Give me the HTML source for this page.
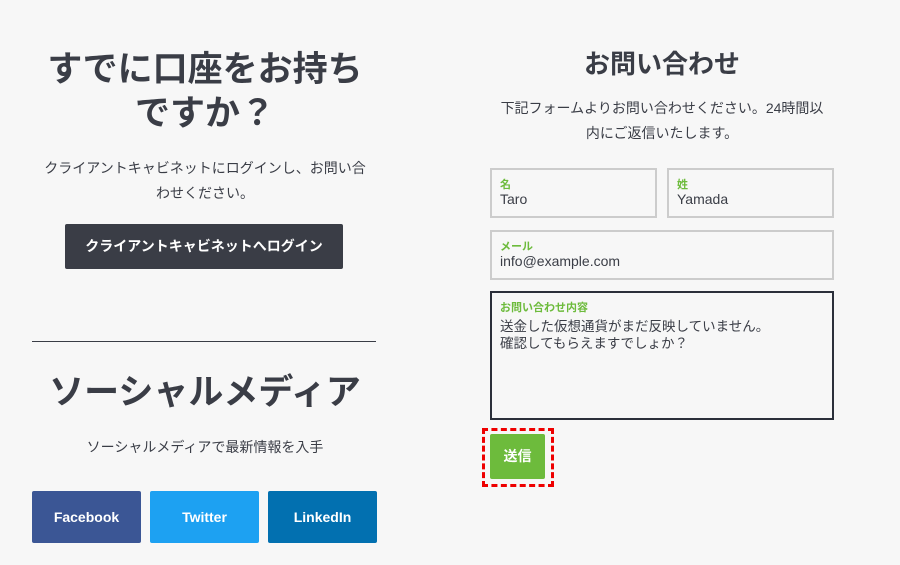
<!DOCTYPE html>
<html><head><meta charset="utf-8"><style>
*{box-sizing:border-box;margin:0;padding:0}
body{width:900px;height:565px;background:#f7f7f7;font-family:"Liberation Sans","Noto Sans CJK JP",sans-serif;color:#3a3d46;position:relative;overflow:hidden}
.a{position:absolute}
h1{font-weight:bold;font-size:35px;line-height:44px;text-align:center;color:#3a3d46}
p{font-size:14px;line-height:25px;text-align:center;color:#3a3d46}
.f{position:absolute;border:2px solid #ccc;background:#f7f7f7}
.f .l{position:absolute;left:8px;top:6px;font-size:11px;font-weight:bold;color:#6dbb3c}
.f .v{position:absolute;left:8px;top:21px;font-size:14px;color:#3a3d46}
.s{position:absolute;top:491px;height:52px;width:109px;color:#fff;font-weight:bold;font-size:14px;text-align:center;line-height:52px;border-radius:2px}
</style></head><body>
<h1 class="a" style="left:20px;top:48px;width:370px">すでに口座をお持ち<br>ですか？</h1>
<p class="a" style="left:20px;top:156px;width:370px">クライアントキャビネットにログインし、お問い合<br>わせください。</p>
<div class="a" style="left:65px;top:224px;width:278px;height:45px;background:#3a3d46;color:#fff;font-weight:bold;font-size:14px;text-align:center;line-height:45px;border-radius:2px">クライアントキャビネットへログイン</div>
<div class="a" style="left:32px;top:341px;width:344px;height:1px;background:#3a3d46"></div>
<h1 class="a" style="left:20px;top:371px;width:370px">ソーシャルメディア</h1>
<p class="a" style="left:20px;top:435px;width:370px">ソーシャルメディアで最新情報を入手</p>
<div class="s" style="left:32px;background:#3b5695">Facebook</div>
<div class="s" style="left:150px;background:#1da1f2">Twitter</div>
<div class="s" style="left:268px;background:#0270b0">LinkedIn</div>
<h1 class="a" style="left:490px;top:47px;width:344px;font-size:26px;line-height:34px">お問い合わせ</h1>
<p class="a" style="left:470px;top:96px;width:384px">下記フォームよりお問い合わせください。24時間以<br>内にご返信いたします。</p>
<div class="f" style="left:490px;top:168px;width:167px;height:50px"><span class="l">名</span><span class="v">Taro</span></div>
<div class="f" style="left:667px;top:168px;width:167px;height:50px"><span class="l">姓</span><span class="v">Yamada</span></div>
<div class="f" style="left:490px;top:230px;width:344px;height:50px"><span class="l">メール</span><span class="v">info@example.com</span></div>
<div class="f" style="left:490px;top:291px;width:344px;height:129px;border-color:#2b2f3a"><span class="l">お問い合わせ内容</span><span class="v" style="line-height:17px;top:25px;font-size:13.5px">送金した仮想通貨がまだ反映していません。<br>確認してもらえますでしょか？</span></div>
<div class="a" style="left:482px;top:428px;width:72px;height:59px;border:3px dashed #e00"></div>
<div class="a" style="left:490px;top:434px;width:55px;height:45px;background:#6dbb3c;color:#fff;font-weight:bold;font-size:14px;text-align:center;line-height:45px;border-radius:2px">送信</div>
</body></html>
